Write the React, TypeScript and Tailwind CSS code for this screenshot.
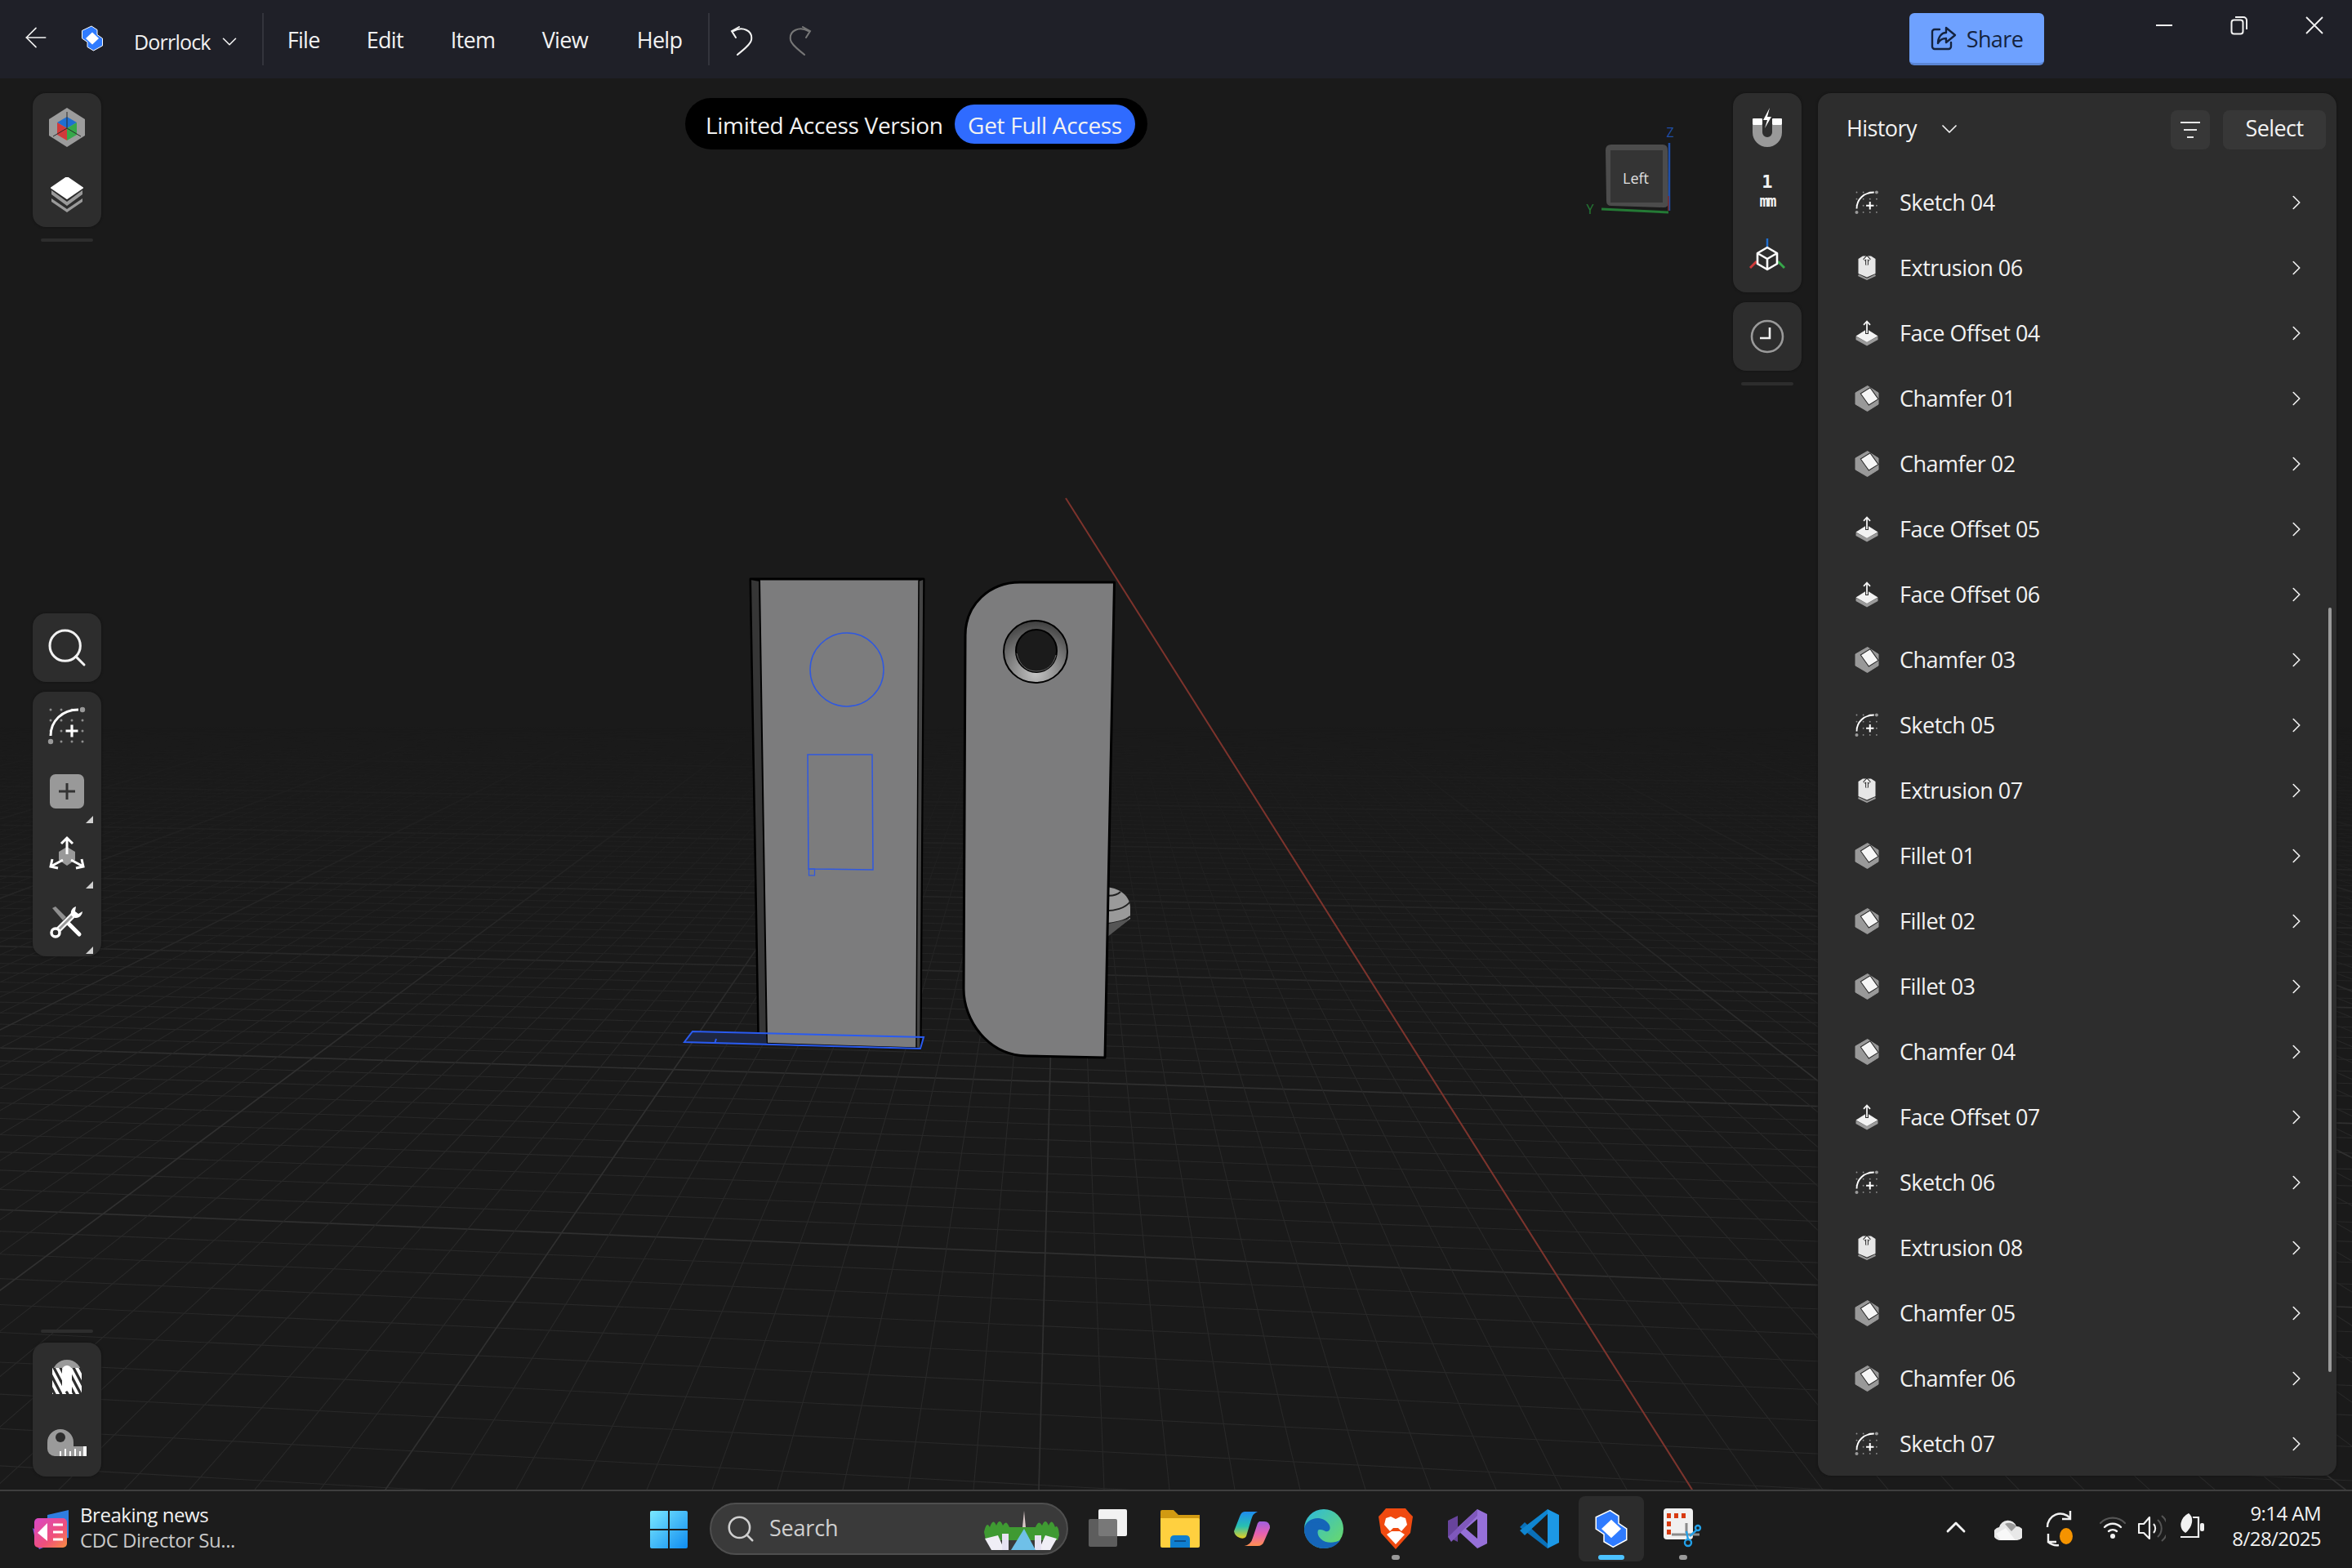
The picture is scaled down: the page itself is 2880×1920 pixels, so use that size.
import React from 'react';
import { ChevronDown, ChevronRight, ArrowLeft, Search, ChevronUp } from 'lucide-react';

type Kind = 'sketch' | 'extrude' | 'offset' | 'chamfer';

const historyRows: { name: string; kind: Kind }[] = [
  { name: 'Sketch 04', kind: 'sketch' },
  { name: 'Extrusion 06', kind: 'extrude' },
  { name: 'Face Offset 04', kind: 'offset' },
  { name: 'Chamfer 01', kind: 'chamfer' },
  { name: 'Chamfer 02', kind: 'chamfer' },
  { name: 'Face Offset 05', kind: 'offset' },
  { name: 'Face Offset 06', kind: 'offset' },
  { name: 'Chamfer 03', kind: 'chamfer' },
  { name: 'Sketch 05', kind: 'sketch' },
  { name: 'Extrusion 07', kind: 'extrude' },
  { name: 'Fillet 01', kind: 'chamfer' },
  { name: 'Fillet 02', kind: 'chamfer' },
  { name: 'Fillet 03', kind: 'chamfer' },
  { name: 'Chamfer 04', kind: 'chamfer' },
  { name: 'Face Offset 07', kind: 'offset' },
  { name: 'Sketch 06', kind: 'sketch' },
  { name: 'Extrusion 08', kind: 'extrude' },
  { name: 'Chamfer 05', kind: 'chamfer' },
  { name: 'Chamfer 06', kind: 'chamfer' },
  { name: 'Sketch 07', kind: 'sketch' },
];

const SketchIcon = ({ size }: { size: number }) => {
  const dots: number[][] = [];
  [4, 17, 30, 43].forEach((y) => [4, 17, 30, 43].forEach((x) => dots.push([x, y])));
  return (
    <svg width={size} height={size} viewBox="0 0 48 48">
      {dots.map(([x, y]) => (
        <circle key={`${x}-${y}`} cx={x} cy={y} r="1.5" fill="#8f8f8f" />
      ))}
      <path d="M4 36 C4 18 18 4 38 4" fill="none" stroke="#fff" strokeWidth="3" />
      <circle cx="43" cy="4" r="3.2" fill="#999" />
      <circle cx="4" cy="43" r="3.2" fill="#999" />
      <path d="M30 22.5 V37.5 M22.5 30 H37.5" stroke="#fff" strokeWidth="3.2" />
    </svg>
  );
};

const ExtrudeIcon = () => (
  <svg width="30" height="32" viewBox="0 0 30 32">
    <path d="M4.5 5 L10 1.5 H20 L25.5 5 V23 L15 27.5 L4.5 23 Z" fill="#e6e6e6" />
    <path d="M4.5 25 L15 30 L25.5 25" fill="none" stroke="#9a9a9a" strokeWidth="2" />
    <path d="M15 12.5 V3 M11.5 6.5 L15 3 L18.5 6.5" fill="none" stroke="#2d2d2d" strokeWidth="3.8" />
    <path d="M15 12.5 V3 M11.8 6.2 L15 3 L18.2 6.2" fill="none" stroke="#fff" strokeWidth="1.6" />
  </svg>
);

const OffsetIcon = () => (
  <svg width="30" height="32" viewBox="0 0 30 32">
    <path d="M1.5 20 V24 L15 31.5 L28.5 24 V20 L15 27 Z" fill="#9a9a9a" />
    <path d="M15 11 L28.5 19.5 L15 27 L1.5 19.5 Z" fill="#f2f2f2" />
    <path d="M15 17 V2 M10.5 6.5 L15 2 L19.5 6.5" fill="none" stroke="#2d2d2d" strokeWidth="4" />
    <path d="M15 16 V1.5 M11 5.8 L15 1.5 L19 5.8" fill="none" stroke="#f2f2f2" strokeWidth="1.8" />
  </svg>
);

const ChamferIcon = () => (
  <svg width="30" height="32" viewBox="0 0 30 32">
    <path d="M15.7 .5 L29 9 V23 L15.5 31.5 L1 23 V9 Z" fill="#999" stroke="#999" strokeLinejoin="round" />
    <path d="M7.3 10 L19 2.7 L29 16.7 L17.3 24 Z" fill="#f6f6f6" stroke="#2d2d2d" strokeWidth="1.1" />
  </svg>
);

const RowIcon = ({ kind }: { kind: Kind }) => {
  if (kind === 'sketch') return <SketchIcon size={30} />;
  if (kind === 'extrude') return <ExtrudeIcon />;
  if (kind === 'offset') return <OffsetIcon />;
  return <ChamferIcon />;
};

const AppLogo = ({ w, h }: { w: number; h: number }) => (
  <svg width={w} height={h} viewBox="0 0 28 32">
    <path d="M13 1 L20 5.5 V11.5 L26.5 16 V25 L15.5 31 L8 26.5 V20.5 L1.5 16 V6.5 Z" fill="#2f7bff" stroke="#fff" strokeWidth="1" />
    <path d="M14 8.5 L22 16 L14 23.5 L6 16 Z" fill="#fff" />
  </svg>
);

const Corner = () => (
  <div className="absolute right-[10px] bottom-[1px] w-0 h-0 border-l-[9px] border-l-transparent border-b-[9px] border-b-[#d0d0d0]" />
);

const Slot = ({ children, corner }: { children: React.ReactNode; corner?: boolean }) => (
  <div className="relative h-[80px] w-full flex items-center justify-center">
    {children}
    {corner && <Corner />}
  </div>
);

const HexTool = () => (
  <svg width="44" height="48" viewBox="0 0 44 48">
    <path d="M22 0 L44 14 V34 L22 48 L0 34 V14 Z" fill="#9c9c9c" />
    <path d="M22 11 L34 18 L22 25 Z" fill="#1f6fd1" />
    <path d="M22 11 L10 18 L22 25 Z" fill="#1f6fd1" />
    <path d="M10 18 L22 25 V40 L10 33 Z" fill="#d13a3a" />
    <path d="M34 18 L22 25 V40 L34 33 Z" fill="#36a84a" />
    <path d="M22 5 V25 M22 25 L5 35 M22 25 L39 35" stroke="#2a2a2a" strokeWidth="1" fill="none" />
  </svg>
);

const LayersTool = () => (
  <svg width="44" height="44" viewBox="0 0 44 44" className="mt-[6px]">
    <path d="M3 27 L22 40 L41 27 V23 L22 36 L3 23 Z" transform="translate(0 3)" fill="#9a9a9a" />
    <path d="M3 19 L22 33 L41 19 V14 L22 28 L3 14 Z" transform="translate(0 2)" fill="#9a9a9a" />
    <path d="M22 0 L41 13 L22 26 L3 13 Z" fill="#fff" stroke="#fff" strokeLinejoin="round" strokeWidth="2" />
  </svg>
);

const AddTool = () => (
  <svg width="42" height="42" viewBox="0 0 42 42">
    <rect width="42" height="42" rx="7" fill="#999" />
    <path d="M21 11 V31 M11 21 H31" stroke="#333" strokeWidth="3" />
  </svg>
);

const MoveTool = () => (
  <svg width="44" height="44" viewBox="0 0 44 44" className="mb-[8px]">
    <path d="M22 14 L32 20 V30 L22 37 L12 30 V20 Z" fill="#999" />
    <path d="M22 23 V3 M15 10 L22 3 L29 10" fill="none" stroke="#fff" strokeWidth="3" />
    <path d="M17 30 L2 38 M4 29 L2 38 L11 40" fill="none" stroke="#fff" strokeWidth="3" />
    <path d="M27 30 L42 38 M40 29 L42 38 L33 40" fill="none" stroke="#fff" strokeWidth="3" />
  </svg>
);

const ToolsTool = () => (
  <svg width="42" height="40" viewBox="0 0 42 40">
    <path d="M3 3 L7 1 L20 14 L16 18 Z" fill="#8f8f8f" />
    <path d="M20 19 L36 35" stroke="#fff" strokeWidth="5" strokeLinecap="round" />
    <path d="M9 31 L31 9" stroke="#fff" strokeWidth="7" />
    <path d="M10 30 L30 10" stroke="#9a9a9a" strokeWidth="3" />
    <path d="M32 1 A8 8 0 0 0 27 13 L31 15 A8 8 0 0 0 40 7 L35 10 L31 7 Z" fill="#fff" />
    <circle cx="7" cy="33" r="5" fill="#2d2d2d" stroke="#fff" strokeWidth="3.5" />
  </svg>
);

const StripesTool = () => (
  <svg width="36" height="42" viewBox="0 0 36 42">
    <defs>
      <clipPath id="stripeClip">
        <rect x="0" y="10" width="36" height="32" />
      </clipPath>
    </defs>
    <path d="M0 18 A18 18 0 0 1 36 18 V20 H0 Z" fill="#9a9a9a" />
    <g clipPath="url(#stripeClip)">
      <rect x="0" y="10" width="36" height="32" fill="#fff" />
      {[-24, -16, -8, 0, 8, 16, 24, 32].map((o) => (
        <path key={o} d={`M${o} 6 L${o + 20} 44`} stroke="#2d2d2d" strokeWidth="3.2" />
      ))}
    </g>
    <path d="M12 42 V13 A6 6 0 0 1 24 13 V42 L18 38 Z" fill="#fff" />
  </svg>
);

const TapeTool = () => (
  <svg width="48" height="33" viewBox="0 0 48 33">
    <path d="M0 16 A16 16 0 0 1 32 16 V21 H48 V33 H9 A9 9 0 0 1 0 24 Z" fill="#9a9a9a" />
    <circle cx="16" cy="10" r="6" fill="#2d2d2d" />
    <rect x="44" y="21" width="4" height="12" fill="#fff" />
    {[15, 21, 27, 33, 39].map((x, i) => (
      <rect key={x} x={x} y={i % 2 ? 24 : 27} width="2" height={i % 2 ? 9 : 6} fill="#fff" />
    ))}
  </svg>
);

const MagnetTool = () => (
  <svg width="40" height="48" viewBox="0 0 40 48">
    <path d="M2 21 V30 A18 18 0 0 0 38 30 V21 H26 V30 A6 6 0 0 1 14 30 V21 Z" fill="#999" />
    <rect x="2" y="13" width="12" height="8" rx="1" fill="#fff" />
    <rect x="26" y="13" width="12" height="8" rx="1" fill="#fff" />
    <path d="M23 0 L15 15 H20 L17 25 L25 11 H20 Z" fill="#fff" />
  </svg>
);

const AxisTool = () => (
  <svg width="44" height="48" viewBox="0 0 44 48">
    <path d="M22 0 V11" stroke="#1f6fd1" strokeWidth="2.5" />
    <path d="M9 28 L1 36" stroke="#d13a3a" strokeWidth="3" />
    <path d="M35 28 L43 36" stroke="#36a84a" strokeWidth="3" />
    <path d="M22 11 L34 18 V31 L22 38 L10 31 V18 Z M10 18 L22 25 L34 18 M22 25 V38" fill="#2d2d2d" stroke="#fff" strokeWidth="2.6" strokeLinejoin="round" />
  </svg>
);

const FilterIcon = () => (
  <svg width="24" height="24" viewBox="0 0 24 24">
    <path d="M0 3 H24 M4 12 H20 M8 21 H16" stroke="#e8e8e8" strokeWidth="2" />
  </svg>
);

const ShareIcon = () => (
  <svg width="32" height="30" viewBox="0 0 32 30" fill="none" stroke="#14233f" strokeWidth="2.4" strokeLinejoin="round" strokeLinecap="round">
    <path d="M11 4 H5 A3 3 0 0 0 2 7 V25 A3 3 0 0 0 5 28 H22 A3 3 0 0 0 25 25 V20" />
    <path d="M19 2 L30 11 L19 20 V15 C14 15 11 17 9 21 C9 14 13 8 19 8 Z" />
  </svg>
);

const RestoreIcon = () => (
  <svg width="22" height="24" viewBox="0 0 22 24" fill="none" stroke="#f2f2f2" strokeWidth="2">
    <rect x="1.5" y="5.5" width="14" height="17" rx="3" />
    <path d="M6 2 H16 A4 4 0 0 1 20 6 V17" />
  </svg>
);

const UndoIcon = ({ color, flip }: { color: string; flip?: boolean }) => (
  <svg width="34" height="36" viewBox="0 0 34 36" fill="none" stroke={color} strokeWidth="2" strokeLinecap="round" className={flip ? 'scale-x-[-1]' : ''}>
    <path d="M7 6 C18 0 31 5 29 17 C28 23 19 29 12 35" />
    <path d="M14 1 L5 6 L10 14" />
  </svg>
);

const ToolPanel = ({ children, className }: { children: React.ReactNode; className: string }) => (
  <div className={`w-[84px] rounded-[16px] bg-[#2d2d2d] pt-[2px] flex flex-col items-center shadow-[0_0_3px_#111] ${className}`}>
    {children}
  </div>
);

const Rule = ({ className }: { className: string }) => (
  <div className={`w-[64px] h-[4px] mx-auto rounded-full bg-[#2d2d2d] ${className}`} />
);

// perspective floor: both line families run to vanishing points on the horizon
const VP_X = 1305;
const VP_Y = 610;
const SIDE_X = -21000;
const FLOOR_K = 30300;

const rowLines = Array.from({ length: 380 }, (_, i) => i + 21).map((n) => {
  const at = (x: number) => VP_Y + (FLOOR_K / n) * ((x - SIDE_X) / (480 - SIDE_X));
  return { n, y1: at(0), y2: at(2880), major: (n - 4) % 10 === 0 };
});

const colLines = Array.from({ length: 801 }, (_, i) => i - 400).map((k) => {
  const bx = 2072 + 80 * k;
  const t = (1824 - VP_Y) * 1.2;
  const dx = (bx - VP_X) * 1.2;
  return { k, x2: VP_X + dx, y2: VP_Y + t, major: k % 10 === 0 };
});

const Floor = () => (
  <svg className="absolute inset-0 w-full h-full" viewBox="0 96 2880 1728">
    <defs>
      <linearGradient id="fade" gradientUnits="userSpaceOnUse" x1="0" y1="890" x2="0" y2="1300">
        <stop offset="0" stopColor="#000" />
        <stop offset="0.35" stopColor="#555" />
        <stop offset="1" stopColor="#fff" />
      </linearGradient>
      <mask id="floorMask" maskUnits="userSpaceOnUse" x="0" y="96" width="2880" height="1728">
        <rect x="0" y="96" width="2880" height="1728" fill="url(#fade)" />
      </mask>
      <radialGradient id="ring" cx="0.5" cy="0.85" r="0.85">
        <stop offset="0" stopColor="#c4c4c4" />
        <stop offset="1" stopColor="#3e3e3e" />
      </radialGradient>
    </defs>
    <g mask="url(#floorMask)">
      {rowLines.map((l) => (
        <line key={l.n} x1="0" y1={l.y1} x2="2880" y2={l.y2} stroke={l.major ? '#303030' : '#292929'} strokeWidth={l.major ? 1.7 : 1.1} />
      ))}
      {colLines.map((l) => (
        <line key={l.k} x1={VP_X} y1={VP_Y} x2={l.x2} y2={l.y2} stroke={l.major ? '#303030' : '#292929'} strokeWidth={l.major ? 1.7 : 1.1} />
      ))}
    </g>

    <line x1="1305" y1="610" x2="2072" y2="1824" stroke="#7d332c" strokeWidth="2" />

    {/* left block */}
    <path d="M919 709 L1131 709 L1127 1284 L929 1278 Z" fill="#7c7c7d" stroke="#000" strokeWidth="3" strokeLinejoin="round" />
    <path d="M919 709 L930 711 L939 1279 L929 1278 Z" fill="#363636" stroke="#000" strokeWidth="2" />
    <path d="M1125 711 L1131 709 L1127 1284 L1122 1283 Z" fill="#444" stroke="#000" strokeWidth="1.5" />
    <circle cx="1037" cy="820" r="45" fill="none" stroke="#2f58e0" strokeWidth="1.5" />
    <path d="M989 924 L1068 924 L1069 1065 L990 1064 Z" fill="none" stroke="#2f58e0" strokeWidth="1.5" />
    <rect x="990.5" y="1064" width="7" height="8" fill="none" stroke="#2f58e0" strokeWidth="1.2" />
    <path d="M848 1263 L938 1266 L939 1279 L838 1276 Z" fill="#1e2742" />
    <path d="M848 1263 L1131 1270 L1127 1284 L838 1276 Z M875 1278 L877 1272" fill="none" stroke="#2a5bf0" strokeWidth="2" />

    {/* knob behind the right block */}
    <path d="M1350 1086 C1372 1086 1384 1098 1384 1112 V1125 L1350 1150 Z" fill="#9a9a9a" />
    <path d="M1350 1096 C1362 1098 1368 1096 1372 1092 M1350 1115 C1365 1116 1378 1112 1384 1104 M1350 1132 C1365 1130 1378 1128 1384 1122" fill="none" stroke="#222" strokeWidth="2" />
    <path d="M1350 1133 L1384 1125 L1350 1152 Z" fill="#555" />

    {/* right block */}
    <path d="M1249 713 L1364.5 713 L1353 1295 L1257 1293 C1210 1292 1180 1250 1180 1211 L1182 778 C1182 740 1212 713 1249 713 Z" fill="#7c7c7d" stroke="#000" strokeWidth="3" strokeLinejoin="round" />
    <ellipse cx="1268" cy="798" rx="39" ry="38" fill="url(#ring)" stroke="#000" strokeWidth="2" />
    <ellipse cx="1269" cy="797" rx="25" ry="26" fill="#1b1b1b" stroke="#000" strokeWidth="2" />
    <path d="M1245 800 C1248 815 1258 822 1269 822 C1282 822 1290 814 1293 802" fill="none" stroke="#666" strokeWidth="1" />

    {/* view cube */}
    <path d="M1966 184 Q1966 177 1973 177 L2036 177 Q2042 177 2042 184 L2043 248 Q2043 254 2037 254 L1973 252 Q1967 252 1967 246 Z" fill="#4c4c4c" />
    <rect x="1972" y="184" width="64" height="64" fill="#343434" />
    <path d="M2044 175 V258" stroke="#1f4fa8" strokeWidth="2.5" />
    <path d="M2043 240 V258" stroke="#7d2a2a" strokeWidth="1.5" />
    <path d="M1961 256 L2043 260" stroke="#247a35" strokeWidth="3" />
    <text x="2003" y="225" textAnchor="middle" fontSize="18" fill="#e0e0e0" fontFamily="Open Sans, sans-serif">Left</text>
    <text x="2045" y="168" textAnchor="middle" fontSize="16" fill="#1f4fa8" fontFamily="Open Sans, sans-serif">Z</text>
    <text x="1947" y="262" textAnchor="middle" fontSize="16" fill="#247a35" fontFamily="Open Sans, sans-serif">Y</text>
  </svg>
);

const TaskIcon = ({ children, dot, active }: { children: React.ReactNode; dot?: boolean; active?: boolean }) => (
  <div className={`relative w-[80px] h-[80px] mx-[4px] flex items-center justify-center rounded-[8px] ${active ? 'bg-[#2c2c2c]' : ''}`}>
    {children}
    {dot && <div className="absolute bottom-[2px] w-[10px] h-[6px] rounded-full bg-[#9a9a9a]" />}
    {active && <div className="absolute bottom-[2px] w-[32px] h-[6px] rounded-full bg-[#4cc2ff]" />}
  </div>
);

const App: React.FC = () => {
  return (
    <div className="w-[2880px] h-[1920px] flex flex-col overflow-hidden bg-[#1a1a1a] text-[#f2f2f2] font-['Open_Sans',sans-serif]">
      {/* title bar */}
      <div className="h-[96px] shrink-0 bg-[#1f2028] flex items-center text-[26px]">
        <ArrowLeft className="ml-[24px] w-[40px] h-[40px] mb-[4px]" strokeWidth={1} />
        <div className="ml-[35px] mt-[-2px]"><AppLogo w={28} h={32} /></div>
        <span className="ml-[37px] text-[25px] tracking-[-0.8px] mt-[8px]">Dorrlock</span>
        <ChevronDown className="ml-[8px] mt-[6px] w-[30px] h-[30px]" strokeWidth={1.3} />
        <div className="ml-[25px] w-[2px] h-[64px] bg-[#33343c]" />
        <nav className="flex mt-[2px] text-[27px] tracking-[-0.7px]">
          <span className="ml-[29px] w-[97px]">File</span>
          <span className="w-[103px]">Edit</span>
          <span className="w-[112px]">Item</span>
          <span className="w-[116px]">View</span>
          <span className="w-[87px]">Help</span>
        </nav>
        <div className="w-[2px] h-[64px] bg-[#33343c]" />
        <div className="ml-[22px] mt-[4px]"><UndoIcon color="#f2f2f2" /></div>
        <div className="ml-[38px] mt-[4px]"><UndoIcon color="#777" flip /></div>
        <button className="ml-auto mr-[101px] w-[165px] h-[64px] rounded-[6px] bg-[#6ea1ff] border-b-[3px] border-b-[#5a85d4] flex items-center justify-center gap-[12px] text-[#14233f] text-[27px] tracking-[-0.6px]">
          <ShareIcon />
          <span className="mt-[3px]">Share</span>
        </button>
        <div className="w-[92px] h-[20px] mb-[34px] flex items-center justify-center">
          <div className="w-[20px] h-[2px] bg-[#f2f2f2]" />
        </div>
        <div className="w-[92px] mb-[34px] flex justify-center"><RestoreIcon /></div>
        <div className="w-[92px] mb-[34px] flex justify-center">
          <svg width="22" height="22" viewBox="0 0 22 22" fill="none" stroke="#f2f2f2" strokeWidth="1.8">
            <path d="M1 1 L21 21 M21 1 L1 21" />
          </svg>
        </div>
      </div>

      {/* viewport */}
      <div className="relative flex-1 flex pt-[18px]">
        <Floor />

        <div className="relative ml-[40px] w-[84px] flex flex-col">
          <ToolPanel className="h-[164px]">
            <Slot><HexTool /></Slot>
            <Slot><LayersTool /></Slot>
          </ToolPanel>
          <Rule className="mt-[14px]" />
          <ToolPanel className="mt-[455px] h-[84px] !pt-0 justify-center">
            <Search className="w-[56px] h-[56px]" strokeWidth={1.3} />
          </ToolPanel>
          <ToolPanel className="mt-[12px] h-[324px]">
            <Slot><SketchIcon size={48} /></Slot>
            <Slot corner><AddTool /></Slot>
            <Slot corner><MoveTool /></Slot>
            <Slot corner><ToolsTool /></Slot>
          </ToolPanel>
          <Rule className="mt-[457px]" />
          <ToolPanel className="mt-[12px] h-[164px]">
            <Slot><StripesTool /></Slot>
            <Slot><TapeTool /></Slot>
          </ToolPanel>
        </div>

        <div className="relative ml-[715px] mt-[6px] w-[566px] h-[63px] rounded-full bg-black flex items-center pl-[25px] text-[28px] font-medium tracking-[-0.3px]">
          <span className="w-[305px] whitespace-nowrap pt-[3px]">Limited Access Version</span>
          <span className="w-[221px] h-[48px] rounded-full bg-[#2f6bff] flex items-center justify-center whitespace-nowrap pt-[3px]">Get Full Access</span>
        </div>

        <div className="relative ml-[717px] w-[84px] flex flex-col">
          <ToolPanel className="h-[244px]">
            <Slot><MagnetTool /></Slot>
            <Slot>
              <div className="flex flex-col items-center leading-none font-['DejaVu_Sans_Mono',monospace] font-bold mb-[4px]">
                <span className="text-[22px]">1</span>
                <span className="text-[19px] mt-[3px] tracking-[-2px]">mm</span>
              </div>
            </Slot>
            <Slot><AxisTool /></Slot>
          </ToolPanel>
          <ToolPanel className="mt-[12px] h-[84px] !pt-0 justify-center">
            <svg width="42" height="42" viewBox="0 0 42 42" fill="none">
              <circle cx="21" cy="21" r="19" stroke="#9a9a9a" strokeWidth="2.6" />
              <path d="M24 10 V23 H12" stroke="#f2f2f2" strokeWidth="2.6" />
            </svg>
          </ToolPanel>
          <Rule className="mt-[14px]" />
        </div>

        {/* history panel */}
        <div className="relative ml-[20px] w-[635px] h-[1693px] rounded-[16px] bg-[#2d2d2d] shadow-[0_0_3px_#111] overflow-hidden">
          <div className="h-[94px] flex items-center text-[27px] tracking-[-0.6px]">
            <span className="ml-[35px] mb-[7px]">History</span>
            <ChevronDown className="ml-[24px] w-[32px] h-[32px] mb-[7px]" strokeWidth={1.3} />
            <div className="ml-auto w-[48px] h-[48px] mt-[-4px] rounded-[8px] bg-[#373737] flex items-center justify-center">
              <FilterIcon />
            </div>
            <div className="ml-[16px] mr-[13px] mt-[-4px] w-[126px] h-[48px] rounded-[8px] bg-[#373737] flex items-center justify-center pb-[4px]">Select</div>
          </div>
          <div>
            {historyRows.map((row) => (
              <div key={row.name} className="h-[80px] flex items-center text-[27px] tracking-[-0.5px]">
                <div className="ml-[45px] w-[30px] h-[32px] flex items-center justify-center"><RowIcon kind={row.kind} /></div>
                <span className="ml-[25px]">{row.name}</span>
                <ChevronRight className="ml-auto mr-[34px] w-[30px] h-[30px]" strokeWidth={1.3} />
              </div>
            ))}
          </div>
          <div className="absolute right-[6px] top-[630px] w-[4px] h-[936px] rounded-full bg-[#9a9a9a]" />
        </div>
      </div>

      {/* taskbar */}
      <div className="h-[96px] shrink-0 bg-[#1c1c1c] border-t-[2px] border-t-[#3e3e3e] flex items-center relative">
        <div className="ml-[38px] w-[48px]">
          <svg width="48" height="48" viewBox="0 0 48 48">
            <path d="M20 6 L46 0 L46 34 L20 40 Z" fill="#2f7de0" />
            <path d="M2 22 L30 40 L10 48 L6 40 Z" fill="#7d55e0" />
            <rect x="4" y="10" width="40" height="36" rx="5" fill="url(#news)" />
            <defs>
              <linearGradient id="news" x1="0" y1="0" x2="1" y2="1">
                <stop offset="0" stopColor="#d848c8" />
                <stop offset="0.6" stopColor="#f0507a" />
                <stop offset="1" stopColor="#f89040" />
              </linearGradient>
            </defs>
            <path d="M8 28 L20 16 V38 Z" fill="#fff" />
            <path d="M27 18 H39 M27 27 H39 M27 36 H39" stroke="#fff" strokeWidth="3" />
          </svg>
        </div>
        <div className="ml-[12px] mb-[7px] flex flex-col leading-[31px] text-[24px] tracking-[-0.45px]">
          <span>Breaking news</span>
          <span className="text-[#c8c8c8]">CDC Director Su...</span>
        </div>

        <div className="absolute left-[796px] top-[24px]">
          <svg width="46" height="46" viewBox="0 0 46 46">
            <defs>
              <linearGradient id="win" x1="0" y1="0" x2="1" y2="1">
                <stop offset="0" stopColor="#7ae8ff" />
                <stop offset="1" stopColor="#0f8cf0" />
              </linearGradient>
            </defs>
            <path d="M0 2 Q0 0 2 0 H22 V22 H0 Z M24 0 H44 Q46 0 46 2 V22 H24 Z M0 24 H22 V46 H2 Q0 46 0 44 Z M24 24 H46 V44 Q46 46 44 46 H24 Z" fill="url(#win)" />
          </svg>
        </div>
        <div className="absolute left-[869px] top-[14px] w-[439px] h-[64px] rounded-full bg-[#3a3a3a] border-[2px] border-[#4f4f4f] flex items-center text-[27px] text-[#d0d0d0] tracking-[-0.2px]">
          <Search className="ml-[17px] w-[38px] h-[38px]" strokeWidth={1.6} />
          <span className="ml-[16px] mb-[1px]">Search</span>
          <svg className="absolute right-[8px] top-[8px]" width="96" height="50" viewBox="0 0 96 50">
            <path d="M52 0 L55 30 H49 Z" fill="#d9c8c8" />
            <path d="M3 26 Q6 12 10 20 Q14 8 18 18 Q22 8 26 18 Q30 10 34 20 H66 Q70 10 74 18 Q78 8 82 18 Q86 8 90 20 Q94 16 95 30 L93 36 H5 Z" fill="#3f9a32" />
            <path d="M4 34 L20 30 L28 48 H12 Z M92 34 L78 30 L70 48 H84 Z" fill="#f0eef6" />
            <path d="M25 28 H33 V48 H25 Z M65 30 H73 V48 H65 Z" fill="#e6e2f2" />
            <path d="M52 22 L66 48 H36 Z" fill="#6fc0e8" />
          </svg>
        </div>

        <div className="absolute left-[1313px] top-[6px] flex">
          <TaskIcon>
            <svg width="48" height="48" viewBox="0 0 48 48">
              <rect x="12" y="0" width="35" height="33" rx="2" fill="#f2f2f2" />
              <rect x="0" y="12" width="35" height="34" rx="2" fill="#666" fillOpacity="0.88" />
            </svg>
          </TaskIcon>
          <TaskIcon>
            <svg width="48" height="46" viewBox="0 0 48 46">
              <path d="M0 2 Q0 0 2 0 H16 L22 6 H48 V14 H0 Z" fill="#d19a12" />
              <path d="M0 10 H46 Q48 10 48 12 V44 Q48 46 46 46 H2 Q0 46 0 44 Z" fill="#ffd03f" />
              <path d="M12 46 V36 Q12 31 17 31 H31 Q36 31 36 36 V46 Z" fill="#0f7fd0" />
              <path d="M17 38 H31" stroke="#0b4f8a" strokeWidth="2" />
            </svg>
          </TaskIcon>
          <TaskIcon>
            <svg width="46" height="42" viewBox="0 0 46 42">
              <defs>
                <linearGradient id="cpA" x1="0" y1="0" x2="0" y2="1">
                  <stop offset="0" stopColor="#1f8cf0" />
                  <stop offset="0.55" stopColor="#28c0b0" />
                  <stop offset="1" stopColor="#e8d020" />
                </linearGradient>
                <linearGradient id="cpB" x1="0" y1="0" x2="0" y2="1">
                  <stop offset="0" stopColor="#a060e0" />
                  <stop offset="0.5" stopColor="#e860b0" />
                  <stop offset="1" stopColor="#ff9050" />
                </linearGradient>
              </defs>
              <path d="M14 0 H30 Q24 2 22 10 L16 30 Q14 34 8 32 Q2 30 1 24 L8 6 Q10 0 14 0 Z" fill="url(#cpA)" />
              <path d="M32 12 H38 Q45 12 45 20 L38 36 Q36 42 30 42 H14 Q22 40 24 32 L30 14 Z" fill="url(#cpB)" />
            </svg>
          </TaskIcon>
          <TaskIcon>
            <svg width="48" height="48" viewBox="0 0 48 48">
              <defs>
                <linearGradient id="edgeA" x1="0" y1="0" x2="1" y2="1">
                  <stop offset="0" stopColor="#2cb8e0" />
                  <stop offset="1" stopColor="#6fdc60" />
                </linearGradient>
              </defs>
              <circle cx="24" cy="24" r="24" fill="url(#edgeA)" />
              <path d="M0 24 C2 10 22 6 30 18 C34 24 30 30 24 26 C14 22 8 32 18 44 C26 48 38 46 44 38 C34 44 14 46 12 30 L0 24 Z" fill="#1565b8" />
              <path d="M0 24 C0 40 14 48 24 48 C34 48 40 44 44 38 C36 42 26 42 20 36 C14 30 16 22 24 19 C14 14 2 16 0 24 Z" fill="#1565b8" />
            </svg>
          </TaskIcon>
          <TaskIcon dot>
            <svg width="42" height="50" viewBox="0 0 42 50">
              <path d="M9 0 H33 L38 6 L42 10 L39 30 L21 50 L3 30 L0 10 L4 6 Z" fill="#f04a10" />
              <path d="M21 44 L32 32 L26 28 H16 L10 32 Z" fill="#fff" />
              <path d="M9 12 L15 10 L21 13 L27 10 L33 12 L35 20 L28 28 L24 24 H18 L14 28 L7 20 Z" fill="#fff" />
            </svg>
          </TaskIcon>
          <TaskIcon>
            <svg width="48" height="48" viewBox="0 0 48 48">
              <path d="M0 14 L12 8 L12 40 L0 34 Z" fill="#68449c" />
              <path d="M12 22 L36 0 L48 6 V42 L36 48 L12 26 Z" fill="#9670d8" />
              <path d="M36 12 V36 L22 24 Z" fill="#1c1c1c" />
              <path d="M4 40 L36 8 L36 0 L0 34 Z" fill="#7f58bc" />
            </svg>
          </TaskIcon>
          <TaskIcon>
            <svg width="48" height="48" viewBox="0 0 48 48">
              <path d="M0 22 L6 16 L36 44 L34 48 Z" fill="#0a70b8" />
              <path d="M0 26 L6 32 L36 4 L34 0 Z" fill="#0f85d0" />
              <path d="M34 0 L48 7 V41 L34 48 Z" fill="#1c98e6" />
              <path d="M34 14 V34 L20 24 Z" fill="#1c1c1c" />
            </svg>
          </TaskIcon>
          <TaskIcon active>
            <AppLogo w={42} h={48} />
          </TaskIcon>
          <TaskIcon dot>
            <svg width="48" height="50" viewBox="0 0 48 50">
              <rect x="0" y="0" width="36" height="38" rx="4" fill="#f0f0f0" />
              <path d="M4 6 H9 V12 H4 Z M13 6 H18 V12 H13 Z M22 6 H27 V12 H22 Z M4 16 H9 V22 H4 Z M4 26 H9 V32 H4 Z" fill="#d83a10" />
              <path d="M28 18 V30 M10 32 H44" stroke="#8a8a8a" strokeWidth="3" />
              <circle cx="30" cy="42" r="4" fill="none" stroke="#22a0e8" strokeWidth="2.4" />
              <circle cx="42" cy="24" r="3" fill="none" stroke="#22a0e8" strokeWidth="2.4" />
              <path d="M30 38 L28 28 M40 27 L32 34" stroke="#22a0e8" strokeWidth="2.4" />
            </svg>
          </TaskIcon>
        </div>

        <ChevronUp className="absolute left-[2375px] top-[24px] w-[40px] h-[40px]" strokeWidth={1.7} />
        <svg className="absolute left-[2442px] top-[34px]" width="34" height="26" viewBox="0 0 34 26">
          <path d="M8 26 A8 8 0 0 1 6 10 A11 11 0 0 1 27 9 A8 8 0 0 1 28 26 Z" fill="#e8e8e8" />
          <path d="M13 6 A11 11 0 0 1 27 9 L21 15 Z" fill="#9a9a9a" />
          <path d="M2 18 L14 11 L26 26 H8 Z" fill="#f8f8f8" />
        </svg>
        <svg className="absolute left-[2505px] top-[22px]" width="36" height="46" viewBox="0 0 36 46" fill="none">
          <path d="M2 22 A16 16 0 0 1 30 11" stroke="#f2f2f2" strokeWidth="2.4" />
          <path d="M30 2 V12 H20" stroke="#f2f2f2" strokeWidth="2.4" />
          <path d="M3 30 V40 H13 M3 40 A16 16 0 0 0 16 44" stroke="#f2f2f2" strokeWidth="2.4" />
          <ellipse cx="25" cy="33" rx="8" ry="10" fill="#f59300" />
        </svg>
        <svg className="absolute left-[2570px] top-[28px]" width="34" height="32" viewBox="0 0 34 32" fill="none" strokeLinecap="round">
          <path d="M2 11 A21 21 0 0 1 32 11" stroke="#555" strokeWidth="2.2" />
          <path d="M7 16 A14 14 0 0 1 27 16 M12 21 A7.5 7.5 0 0 1 22 21" stroke="#f2f2f2" strokeWidth="2.4" />
          <circle cx="17" cy="27" r="3" fill="#f2f2f2" />
        </svg>
        <svg className="absolute left-[2618px] top-[28px]" width="34" height="36" viewBox="0 0 34 36" fill="none">
          <path d="M1 12 H7 L14 4 V30 L7 23 H1 Z" stroke="#f2f2f2" strokeWidth="2.2" strokeLinejoin="round" />
          <path d="M19 12 A8 8 0 0 1 19 23" stroke="#f2f2f2" strokeWidth="2" />
          <path d="M24 7 A14 14 0 0 1 24 28 M29 2 A20 20 0 0 1 29 33" stroke="#555" strokeWidth="2" />
        </svg>
        <svg className="absolute left-[2666px] top-[26px]" width="34" height="34" viewBox="0 0 34 34" fill="none">
          <path d="M10 6 H26 V30 H4" stroke="#f2f2f2" strokeWidth="2.2" />
          <rect x="28" y="13" width="5" height="10" rx="2" fill="#f2f2f2" />
          <path d="M14 0 C22 6 20 18 10 26 C0 20 2 6 14 0 Z" fill="#f2f2f2" stroke="#1c1c1c" strokeWidth="1.5" />
        </svg>

        <div className="absolute right-[38px] top-[11px] flex flex-col items-end leading-[31px] text-[24px] tracking-[-0.55px]">
          <span>9:14 AM</span>
          <span>8/28/2025</span>
        </div>
      </div>
    </div>
  );
};

export default App;
